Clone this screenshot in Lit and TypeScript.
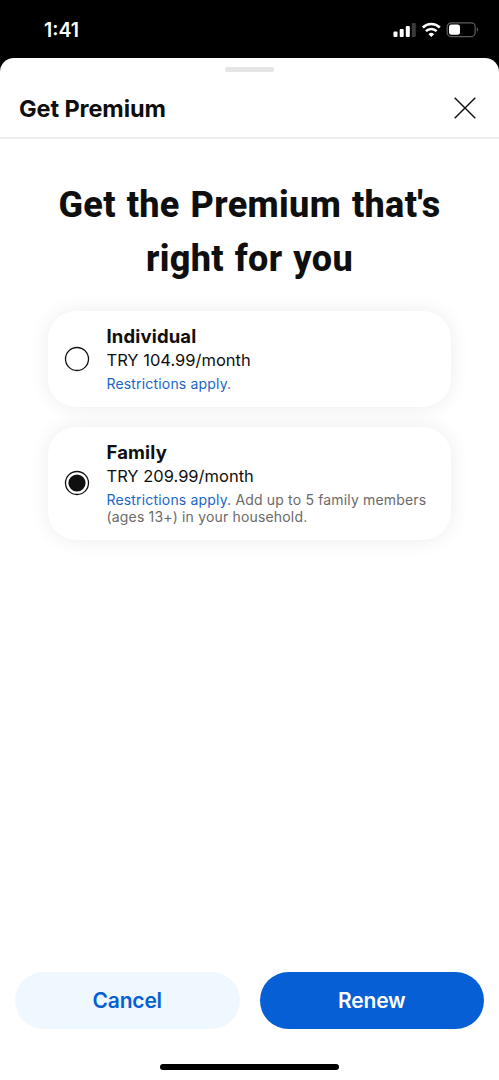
import { LitElement, html, css, svg, nothing } from "lit";
import { customElement, state } from "lit/decorators.js";

interface Plan {
  id: string;
  name: string;
  price: string;
  note?: string;
}

const PLANS: Plan[] = [
  { id: "individual", name: "Individual", price: "TRY 104.99/month" },
  {
    id: "family",
    name: "Family",
    price: "TRY 209.99/month",
    note: "Add up to 5 family members (ages 13+) in your household.",
  },
];

@customElement("app-root")
export class AppRoot extends LitElement {
  @state() private selected = "family";

  static styles = css`
    :host {
      display: flex;
      flex-direction: column;
      height: 1080px;
      background: #000;
      color: #0f0f0f;
      font-family: Inter, "Liberation Sans", sans-serif;
      overflow: hidden;
    }
    .status {
      height: 58px;
      flex: none;
      box-sizing: border-box;
      padding: 2px 20px 0 44px;
      display: flex;
      align-items: center;
      justify-content: space-between;
      color: #fff;
    }
    .time {
      font-size: 19.5px;
      font-weight: 600;
    }
    .signals {
      display: block;
    }
    .sheet {
      flex: 1;
      display: flex;
      flex-direction: column;
      background: #fff;
      border-radius: 14px 14px 0 0;
    }
    .handle {
      width: 49px;
      height: 5px;
      margin: 9px auto 0;
      border-radius: 2px;
      background: #e5e5e5;
    }
    .header {
      box-sizing: border-box;
      height: 67px;
      display: flex;
      align-items: center;
      justify-content: space-between;
      padding: 7px 23px 0 19px;
      border-bottom: 2px solid #eee;
    }
    .title {
      font-size: 23.5px;
      font-weight: 700;
      letter-spacing: -0.1px;
    }
    .close {
      display: block;
    }
    h1 {
      margin: 39px 0 0;
      text-align: center;
      font-family: Roboto, sans-serif;
      font-weight: 800;
      font-size: 36px;
      line-height: 54px;
      letter-spacing: 0.35px;
      word-spacing: 1.5px;
    }
    .plans {
      display: flex;
      flex-direction: column;
      gap: 20px;
      margin: 25px 48px 0;
    }
    .plan {
      display: flex;
      align-items: center;
      gap: 16.5px;
      box-sizing: border-box;
      height: 96px;
      padding: 0 16px 2px;
      border-radius: 28px;
      background: #fff;
      box-shadow: 0 0 20px rgba(0, 0, 0, 0.08);
    }
    .plan.tall {
      height: 113px;
    }
    .radio {
      flex: none;
      display: block;
      margin-top: 1px;
    }
    .name {
      font-size: 18.5px;
      line-height: 24px;
      font-weight: 700;
      letter-spacing: 0.15px;
    }
    .price {
      font-size: 16.5px;
      line-height: 24px;
    }
    .note {
      margin-top: 3px;
      font-size: 14px;
      line-height: 17px;
      letter-spacing: 0.17px;
      color: #6a6a6a;
    }
    .link {
      color: #1a66c8;
    }
    .actions {
      margin-top: auto;
      display: flex;
      gap: 20px;
      padding: 0 15px;
    }
    .btn {
      flex: 1;
      height: 57px;
      border: 0;
      padding: 0;
      border-radius: 29px;
      font: 600 21px Inter, sans-serif;
      letter-spacing: -0.2px;
    }
    .cancel {
      background: #f0f8ff;
      color: #065fd4;
    }
    .renew {
      background: #065fd4;
      color: #fff;
    }
    .home {
      width: 179px;
      height: 6px;
      margin: 35px auto 10px;
      border-radius: 3px;
      background: #000;
    }
  `;

  private renderPlan(p: Plan) {
    const on = p.id === this.selected;
    return html`
      <div class="plan ${p.note ? "tall" : ""}" @click=${() => (this.selected = p.id)}>
        <svg class="radio" width="26" height="26" viewBox="0 0 26 26">
          <circle cx="13" cy="13" r="11.5" fill="none" stroke="#0f0f0f" stroke-width="1.3" />
          ${on ? svg`<circle cx="13" cy="13" r="8.6" fill="#0f0f0f" />` : nothing}
        </svg>
        <div>
          <div class="name">${p.name}</div>
          <div class="price">${p.price}</div>
          <div class="note"><span class="link">Restrictions apply.</span> ${p.note ?? ""}</div>
        </div>
      </div>
    `;
  }

  render() {
    return html`
      <div class="status">
        <span class="time">1:41</span>
        <svg class="signals" width="86" height="18" viewBox="0 0 86 18">
          <g fill="#fff">
            <rect x="0.5" y="10.5" width="4" height="5.5" rx="1" />
            <rect x="6.7" y="8" width="4" height="8" rx="1" />
            <rect x="12.8" y="5" width="4" height="11" rx="1" />
            <rect x="18.8" y="2" width="4" height="14" rx="1" fill="#3a3a3a" />
            <path d="M38.3 16 35.5 13.2a4 4 0 0 1 5.6 0z" />
          </g>
          <g fill="none" stroke="#fff" stroke-width="2.5">
            <path d="M29.8 6.5a12.2 12.2 0 0 1 17 0" />
            <path d="M32.9 10.1a7.7 7.7 0 0 1 10.8 0" />
          </g>
          <rect x="54.2" y="1.8" width="28" height="13.8" rx="4" fill="none" stroke="#5c5c5c" stroke-width="1.2" />
          <rect x="56" y="3.6" width="11" height="10.2" rx="2.4" fill="#fff" />
          <path d="M83.8 6.3v4.8c1.9-.9 1.9-3.9 0-4.8z" fill="#5c5c5c" />
        </svg>
      </div>
      <div class="sheet">
        <div class="handle"></div>
        <div class="header">
          <span class="title">Get Premium</span>
          <svg class="close" width="22" height="22" viewBox="0 0 22 22">
            <path d="M.7.7 21.3 21.3M21.3.7.7 21.3" stroke="#0f0f0f" stroke-width="1.4" />
          </svg>
        </div>
        <h1>Get the Premium that's<br />right for you</h1>
        <div class="plans">${PLANS.map((p) => this.renderPlan(p))}</div>
        <div class="actions">
          <button class="btn cancel">Cancel</button>
          <button class="btn renew">Renew</button>
        </div>
        <div class="home"></div>
      </div>
    `;
  }
}
